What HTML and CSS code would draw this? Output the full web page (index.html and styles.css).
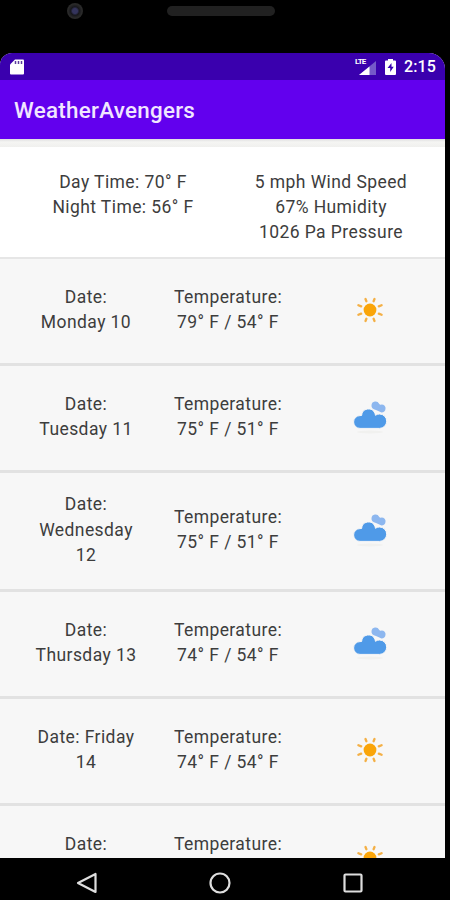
FILE: index.html
```
<!DOCTYPE html>
<html lang="en">
<head>
<meta charset="utf-8">
<title>WeatherAvengers</title>
<link rel="stylesheet" href="styles.css">
</head>
<body>
<svg class="defs" width="0" height="0">
  <symbol id="sun" viewBox="0 0 28 28">
    <circle cx="14" cy="14" r="6.4" fill="#faa50a"/>
    <g stroke="#f4b046" stroke-width="2.3" stroke-linecap="round">
      <path d="M17.600 5.200l.9-2.200M22.800 10.400l2.800-1.200M22.800 17.600l2.800 1.200M17.600 22.800l.9 2.200M10.400 22.800l-.9 2.200M5.200 17.600l-2.800 1.200M5.200 10.400l-2.800-1.200M10.400 5.200l-.9-2.200"/>
    </g>
  </symbol>
  <symbol id="cloud" viewBox="0 0 36 36">
    <ellipse cx="18" cy="33" rx="13" ry="1.500" fill="#f1f1ef"/>
    <path d="M19.500 6a4 4 0 0 1 7.600-1.200Q28 6.300 29.500 5.600a3.800 3.800 0 0 1 4 4.500Q33 13.500 29.500 13.500L24 11Q19 10 19.500 6z" fill="#8db7ef"/>
    <path d="M8 29.400a6.400 6.400 0 0 1 0-12.800l1.600-.1a6.900 6.900 0 0 1 13.300-2.200q.4 1 .5 2q1.700-1.300 4.100-1.300a7.200 7.200 0 0 1 0 14.400z" fill="#4f9ae8" stroke="#f7f7f7" stroke-width="1"/>
  </symbol>
</svg>
<div class="phone">
  <div class="bezel"><span class="camera"></span><span class="speaker"></span></div>
  <div class="screen">
    <div class="status">
      <svg class="sd" width="14" height="16" viewBox="0 0 14 16"><path d="M5 .5h8q1 0 1 1v13q0 1-1 1H1q-1 0-1-1V5.500z" fill="#fff"/><path d="M5.500 2v3M8.500 2v3M11.500 2v3" stroke="#5b3b9e" stroke-width="1.500"/></svg>
      <span class="spacer"></span>
      <span class="signal"><span class="lte">LTE</span><svg width="17" height="14" viewBox="0 0 17 14"><path d="M0 14L17 0v14z" fill="#7559c9"/><path d="M0 14L10.500 5.500V14z" fill="#fff"/></svg></span>
      <svg class="battery" width="11" height="16" viewBox="0 0 11 16"><path d="M3 0h5v1.600h2q1 0 1 1V15q0 1-1 1H1q-1 0-1-1V2.600q0-1 1-1h2z" fill="#fff"/><path d="M6.500 4L2.500 9h2.700v4L8.700 7.800H6.500z" fill="#3700b3"/></svg>
      <span class="clock">2:15</span>
    </div>
    <header class="appbar">WeatherAvengers</header>
    <main class="content">
      <section class="summary">
        <div>Day Time: 70° F<br>Night Time: 56° F</div>
        <div>5 mph Wind Speed<br>67% Humidity<br>1026 Pa Pressure</div>
      </section>
      <section class="day"><div>Date:<br>Monday 10</div><div>Temperature:<br>79° F / 54° F</div><svg class="sun"><use href="#sun"/></svg></section>
      <section class="day"><div>Date:<br>Tuesday 11</div><div>Temperature:<br>75° F / 51° F</div><svg class="cloud"><use href="#cloud"/></svg></section>
      <section class="day tall"><div>Date:<br>Wednesday<br>12</div><div>Temperature:<br>75° F / 51° F</div><svg class="cloud"><use href="#cloud"/></svg></section>
      <section class="day"><div>Date:<br>Thursday 13</div><div>Temperature:<br>74° F / 54° F</div><svg class="cloud"><use href="#cloud"/></svg></section>
      <section class="day"><div>Date: Friday<br>14</div><div>Temperature:<br>74° F / 54° F</div><svg class="sun"><use href="#sun"/></svg></section>
      <section class="day last"><div>Date:</div><div>Temperature:</div><svg class="sun"><use href="#sun"/></svg></section>
    </main>
  </div>
  <nav class="nav">
    <svg width="22" height="22" viewBox="0 0 22 22"><path d="M2 11L19.500 2v18z"/></svg>
    <svg width="22" height="22" viewBox="0 0 22 22"><circle cx="11" cy="11" r="9.500"/></svg>
    <svg width="22" height="22" viewBox="0 0 22 22"><rect x="2.500" y="2.500" width="17" height="17" rx="1"/></svg>
  </nav>
</div>
</body>
</html>
```
FILE: styles.css
```
* { box-sizing: border-box; }
body { margin: 0; background: #000; font-family: Roboto, sans-serif; }
.defs { display: block; height: 0; }
.phone { width: 450px; height: 900px; overflow: hidden; display: flex; flex-direction: column; background: #000; }
.bezel { height: 53px; flex: none; display: flex; align-items: flex-start; }
.camera { width: 16px; height: 16px; margin: 3px 0 0 67px; border-radius: 50%; background: radial-gradient(circle, #34345c 0 22%, #17171c 38%, #292929 60%); }
.speaker { width: 108px; height: 10px; margin: 6px 0 0 84px; border-radius: 5px; background: #212121; }
.screen { width: 445px; height: 805px; flex: none; overflow: hidden; background: #f7f7f7; border-radius: 12px 16px 0 0; }
.status { height: 27px; padding: 0 9px 0 10px; display: flex; align-items: center; background: #3a00ae; color: #fff; }
.spacer { flex: 1; }
.signal { display: flex; align-items: flex-end; height: 17px; width: 21px; position: relative; padding-left: 4px; margin-right: 9px; }
.lte { position: absolute; left: 0; top: 0; font-size: 8px; line-height: 8px; font-weight: 700; letter-spacing: -.8px; }
.battery { margin-right: 8px; }
.clock { font-size: 16px; font-weight: 500; letter-spacing: .1px; width: 32px; white-space: nowrap; }
.appbar { height: 59px; padding-left: 14px; line-height: 61px; font-size: 22.4px; font-weight: 500; letter-spacing: .27px; color: #f1e6ff; background: #6200ee; }
.content { padding-top: 8px; height: 719px; overflow: hidden; background: linear-gradient(#dededf, #f5f5f3 3px, #f0f0ee 8px, #f7f7f7 9px); font-size: 17.5px; line-height: 25.3px; letter-spacing: .42px; color: #3d3d3d; text-align: center; white-space: nowrap; }
.summary { height: 112px; padding: 22.5px 10px 0 19px; display: grid; grid-template-columns: 208px 208px; background: #fff; border-bottom: 2px solid #e6e6e6; }
.day { height: 106.8px; padding: 0 4px 1px 15px; display: grid; grid-template-columns: 142px 142px 142px; align-items: center; justify-items: center; border-bottom: 3px solid #e2e2e2; }
.tall { height: 119.5px; }
.last { align-items: start; padding-top: 26.5px; }
.last .sun { margin-top: 12px; }
.sun { width: 28px; height: 28px; }
.cloud { width: 36px; height: 36px; }
.nav { height: 51px; flex: none; margin-bottom: -9px; padding: 3px 0 4px 76px; display: flex; align-items: center; gap: 111px; }
.nav svg { fill: none; stroke: #dedede; stroke-width: 2.2; stroke-linejoin: round; }
```
